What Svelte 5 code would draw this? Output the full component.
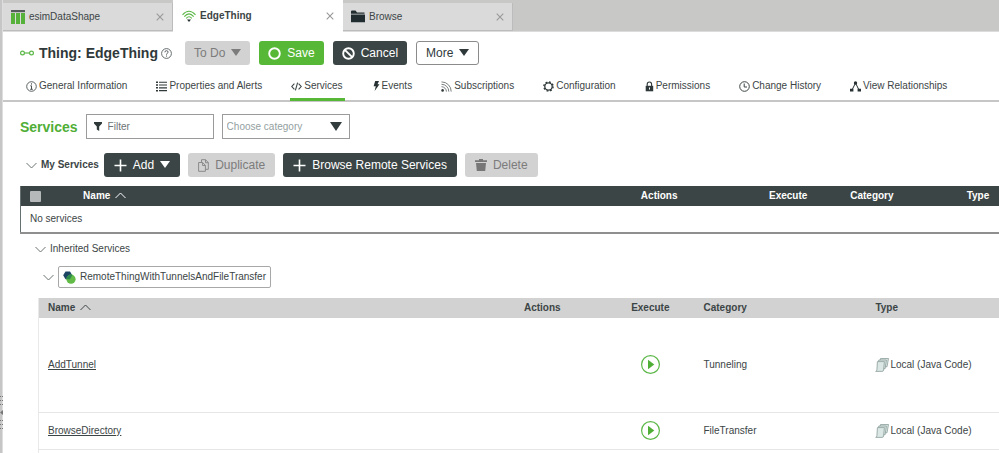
<script>
  const tabs = [
    { label: 'esimDataShape', icon: 'shape' },
    { label: 'EdgeThing', icon: 'wifi', active: true },
    { label: 'Browse', icon: 'folder' }
  ];
  const sections = [
    { label: 'General Information', icon: 'info' },
    { label: 'Properties and Alerts', icon: 'list' },
    { label: 'Services', icon: 'code', active: true },
    { label: 'Events', icon: 'bolt' },
    { label: 'Subscriptions', icon: 'rss' },
    { label: 'Configuration', icon: 'gear' },
    { label: 'Permissions', icon: 'lock' },
    { label: 'Change History', icon: 'clock' },
    { label: 'View Relationships', icon: 'tree' }
  ];
  const services = [
    { name: 'AddTunnel', category: 'Tunneling', type: 'Local (Java Code)', tall: true },
    { name: 'BrowseDirectory', category: 'FileTransfer', type: 'Local (Java Code)' }
  ];
  let filter = $state('');
</script>

{#snippet icon(name)}
  {#if name === 'shape'}
    <svg width="14" height="14" viewBox="0 0 14 14"><path fill="#555b5b" d="M0 0h14v2.200H0z" /><path fill="#55b13a" d="M0 3h4v11H0zM5 3h4v11H5zM10 3h4v11h-4z" /></svg>
  {:else if name === 'wifi'}
    <svg width="14" height="14" viewBox="0 0 14 14" fill="none" stroke="#5cb848" stroke-width="1.100"><path d="M.5 5.800Q7-1.300 13.500 5.800M2.300 7.600Q7 2.200 11.700 7.600M4.200 9.400Q7 6 9.800 9.400" /><path d="M5 10.500h4L7 13z" fill="#273234" stroke="none" /></svg>
  {:else if name === 'folder'}
    <svg width="14" height="13" viewBox="0 0 14 13" fill="#202c2f"><path d="M0 1.500Q0 .5 1 .5h3.500l1.500 2h7.500v1.300H0zM0 4.500h14V12.300H0z" /></svg>
  {:else if name === 'info'}
    <svg width="11" height="11" viewBox="0 0 11 11" fill="none" stroke="#4a5152"><circle cx="5.500" cy="5.500" r="4.800" stroke-width=".9" /><path d="M5.500 2.300v1.300M4.300 4.800h1.200v3.400M4.200 8.300h2.600" /></svg>
  {:else if name === 'list'}
    <svg width="11" height="11" viewBox="0 0 11 11" fill="#30393a"><path d="M0 .5h2v1.500H0zM0 3.300h2v1.500H0zM0 6.100h2v1.500H0zM0 8.900h2v1.500H0zM3 .7h8v1.100H3zM3 3.500h8v1.100H3zM3 6.300h8v1.100H3zM3 9.100h8v1.100H3z" /></svg>
  {:else if name === 'code'}
    <svg width="11" height="9" viewBox="0 0 11 9" fill="none" stroke="#3c4546" stroke-width="1.100"><path d="M3.400 1.700.8 4.500l2.600 2.800M7.600 1.700l2.600 2.800-2.600 2.800M6.600.7 4.400 8.300" /></svg>
  {:else if name === 'bolt'}
    <svg width="7" height="10" viewBox="0 0 7 10" fill="#273032"><path d="M2.200 0H6L4.500 3.300h2L1.600 10l1.200-4.700H.6z" /></svg>
  {:else if name === 'rss'}
    <svg width="11" height="11" viewBox="0 0 11 11" fill="none" stroke="#6c7273" stroke-width=".9"><path d="M.5.900A9.600 9.600 0 0 1 10.200 10.600M.5 3.300A7.200 7.200 0 0 1 7.800 10.600M.5 5.700A4.900 4.900 0 0 1 5.400 10.600" /><circle cx="1.600" cy="9.400" r="1.300" fill="#30393a" stroke="none" /></svg>
  {:else if name === 'gear'}
    <svg width="11" height="11" viewBox="0 0 11 11" fill="none" stroke="#30393a"><circle cx="5.500" cy="5.500" r="3.700" stroke-width="1.300" /><circle cx="5.500" cy="5.500" r="4.600" stroke-width="1.400" stroke-dasharray="1.800 1.813" /></svg>
  {:else if name === 'lock'}
    <svg width="9" height="11" viewBox="0 0 9 11"><path d="M2.200 5V3.200a2.200 2.200 0 0 1 4.400 0V5" fill="none" stroke="#30393a" stroke-width="1.100" /><path d="M.7 4.800h7.500v5.500H.7z" fill="#30393a" /><path d="M4 6.500h1v2H4z" fill="#fff" /></svg>
  {:else if name === 'clock'}
    <svg width="11" height="11" viewBox="0 0 11 11" fill="none" stroke="#3c4546"><circle cx="5.500" cy="5.500" r="4.800" /><path d="M5.200 2.500V6H8" /></svg>
  {:else if name === 'tree'}
    <svg width="11" height="11" viewBox="0 0 11 11" fill="#273032"><path d="M5.500 2 2 9M5.500 2 9 9" stroke="#273032" /><circle cx="5.500" cy="2" r="1.700" /><path d="M0 7.700h3.400v2.800H0zM7.600 7.700H11v2.800H7.600z" /></svg>
  {/if}
{/snippet}

{#snippet down()}
  <svg width="10" height="8" viewBox="0 0 10 8" fill="currentColor"><path d="M0 0h10L5 7z" /></svg>
{/snippet}

{#snippet plus()}
  <svg width="13" height="13" viewBox="0 0 13 13"><path d="M6.500 .5v12M.5 6.500h12" stroke="currentColor" stroke-width="1.600" /></svg>
{/snippet}

{#snippet chevron(up)}
  <svg width="11" height="7" viewBox="0 0 11 7" fill="none" stroke="currentColor"><path d={up ? 'M.5 6 5.500 1l5 5' : 'M.5 1l5 5 5-5'} /></svg>
{/snippet}

<div class="app">
  <div class="grip" aria-hidden="true">
    <svg width="3" height="34" viewBox="0 0 3 34" fill="#777"><path d="M0 0h1v1H0zM2 0h1v1H2zM0 4h1v1H0zM2 4h1v1H2zM0 8h1v1H0zM2 8h1v1H2zM3 14v5L0 16.500zM0 24h1v1H0zM2 24h1v1H2zM0 28h1v1H0zM2 28h1v1H2zM0 32h1v1H0zM2 32h1v1H2z" /></svg>
  </div>
  <div class="main">
    <div class="tabs">
      {#each tabs as tab}
        <div class="tab" class:active={tab.active}>
          <button class="tab-name">{@render icon(tab.icon)}<span>{tab.label}</span></button>
          <button class="close" aria-label="Close {tab.label}">
            <svg width="8" height="8" viewBox="0 0 8 8"><path d="m.7.700 6.600 6.600m0-6.600L.7 7.300" stroke="#999" stroke-width="1.100" /></svg>
          </button>
        </div>
      {/each}
    </div>

    <header>
      <svg width="14" height="6" viewBox="0 0 14 6" fill="none" stroke="#5cb848" stroke-width="1.200"><circle cx="2.500" cy="3" r="1.900" /><circle cx="11.500" cy="3" r="1.900" /><path d="M4.400 3h5.200" /></svg>
      <h1>Thing: EdgeThing</h1>
      <button class="help" aria-label="Help">
        <svg width="11" height="11" viewBox="0 0 11 11" fill="none" stroke="#555c5d"><circle cx="5.500" cy="5.500" r="4.900" stroke-width=".9" /><path d="M3.900 4.300q0-1.600 1.600-1.600t1.600 1.400c0 1.200-1.600 1.100-1.600 2.600M5.500 7.500v1.100" /></svg>
      </button>
      <div class="actions">
        <button class="btn muted" disabled>To Do {@render down()}</button>
        <button class="btn green"><svg width="13" height="13" viewBox="0 0 13 13"><circle cx="6.500" cy="6.500" r="5.300" fill="none" stroke="#fff" stroke-width="1.900" /></svg>Save</button>
        <button class="btn dark"><svg width="13" height="13" viewBox="0 0 13 13" fill="none" stroke="#fff" stroke-width="1.900"><circle cx="6.500" cy="6.500" r="5.300" /><path d="m2.800 2.800 7.400 7.400" /></svg>Cancel</button>
        <button class="btn outline">More {@render down()}</button>
      </div>
    </header>

    <nav>
      {#each sections as s}
        <a href="#{s.icon}" class:current={s.active}>{@render icon(s.icon)}<span>{s.label}</span></a>
      {/each}
    </nav>

    <div class="filters">
      <h2>Services</h2>
      <label class="field">
        <svg width="8" height="9" viewBox="0 0 8 9" fill="#30393a"><path d="M0 0h8v1.500L5.200 4.500V9L2.800 7.500v-3L0 1.500z" /></svg>
        <input type="text" placeholder="Filter" aria-label="Filter" bind:value={filter} />
      </label>
      <label class="field category">
        <select aria-label="Choose category"><option>Choose category</option></select>
        <svg width="12" height="9" viewBox="0 0 12 9" fill="#333c3d"><path d="M0 0h12L6 9z" /></svg>
      </label>
    </div>

    <div class="tools">
      <button class="toggle strong">{@render chevron(false)}My Services</button>
      <button class="btn dark">{@render plus()}Add {@render down()}</button>
      <button class="btn muted" disabled><svg width="11" height="13" viewBox="0 0 11 13" fill="none" stroke="#8a8a8a"><path d="M3.500 3.500V.7h4l2.800 2.800v6.800H7.500M7.500.700v3h2.800M.6 3.500h4L7.400 6.300v6H.6zM4.600 3.500v3h2.800" /></svg>Duplicate</button>
      <button class="btn dark">{@render plus()}Browse Remote Services</button>
      <button class="btn muted" disabled><svg width="12" height="12" viewBox="0 0 12 12" fill="#777"><path d="M4 0h4v1.300h4v1.700H0V1.300h4zM1 4h10l-.8 8H1.800z" /></svg>Delete</button>
    </div>

    <table class="mine">
      <thead>
        <tr>
          <th class="c-check"><input type="checkbox" aria-label="Select all services" /></th>
          <th class="c-name">Name {@render chevron(true)}</th>
          <th class="c-actions">Actions</th>
          <th class="c-exec">Execute</th>
          <th class="c-cat">Category</th>
          <th>Type</th>
        </tr>
      </thead>
      <tbody>
        <tr><td colspan="6">No services</td></tr>
      </tbody>
    </table>

    <div class="inherited">
      <button class="toggle">{@render chevron(false)}Inherited Services</button>
    </div>
    <div class="template">
      <button class="toggle" aria-label="Collapse RemoteThingWithTunnelsAndFileTransfer">{@render chevron(false)}</button>
      <a class="chip" href="#template">
        <svg width="13" height="13" viewBox="0 0 13 13"><path d="M2.500.500h4.500l2.300 3.800L7 8.300H2.500L.2 4.300z" fill="#1c4464" /><circle cx="8" cy="8.200" r="4.600" fill="#62bb46" /><path d="M3.700 6.500A4.600 4.600 0 0 1 8.800 3.700L9.300 4.300 7 8.300H3.400z" fill="#2f8a50" /></svg>
        RemoteThingWithTunnelsAndFileTransfer
      </a>
    </div>

    <table class="list">
      <thead>
        <tr>
          <th class="l-name">Name {@render chevron(true)}</th>
          <th class="l-actions">Actions</th>
          <th class="l-exec">Execute</th>
          <th class="l-cat">Category</th>
          <th>Type</th>
        </tr>
      </thead>
      <tbody>
        {#each services as s}
          <tr class:tall={s.tall}>
            <td><a href="#{s.name}">{s.name}</a></td>
            <td></td>
            <td class="l-exec">
              <button class="run" aria-label="Execute {s.name}">
                <svg width="19" height="19" viewBox="0 0 19 19"><circle cx="9.500" cy="9.500" r="8.900" fill="#fff" stroke="#5cb848" stroke-width="1.200" /><path d="M7 4.700 13.300 9.500 7 14.300z" fill="#4fae36" /></svg>
              </button>
            </td>
            <td>{s.category}</td>
            <td>
              <span class="type">
                <svg width="14" height="14" viewBox="0 0 14 14" fill="#dbe7e4" stroke="#8b9e9b" stroke-width=".8"><path d="M5.500.500h8l-1.500 8.300H4z" /><path d="M3.800 2h7.600l-1.300 8.700H2.500z" /><path d="M2.400 3.600h7L8.600 12q-.2 1.400-1.500 1.400H.7q1.200-.3 1.200-1.600z" /></svg>
                {s.type}
              </span>
            </td>
          </tr>
        {/each}
        <tr class="next"><td colspan="5"></td></tr>
      </tbody>
    </table>
  </div>
</div>

<style>
  :global(body) { margin: 0; background: #fff; }
  .app {
    display: flex;
    height: 100vh;
    overflow: hidden;
    box-sizing: border-box;
    font-family: "Liberation Sans", Arial, sans-serif;
    font-size: 10px;
    line-height: 14px;
    color: #3c4546;
  }
  svg { display: block; flex: none; }
  button, input, select { font: inherit; color: inherit; margin: 0; }
  button { border: 0; padding: 0; background: none; }
  a { color: inherit; text-decoration: none; }
  h1, h2 { margin: 0; }
  .grip { width: 3px; flex: none; background: #c6c6c6; border-right: 1px solid #dedede; padding-top: 396px; box-sizing: border-box; }
  .main { flex: 1; min-width: 0; }

  .tabs { display: flex; height: 32px; background: #c8c8c6; border-bottom: 1px solid #dcdcdc; box-sizing: border-box; }
  .tab {
    display: flex;
    align-items: center;
    justify-content: space-between;
    width: 170px;
    margin-top: 3px;
    padding: 0 8px;
    box-sizing: border-box;
    background: #dadada;
    border-right: 1px solid #bcbcbc;
    border-bottom: 1px solid #bcbcbc;
  }
  .tab.active { margin: 0 0 -1px; padding: 0 9px; background: #fff; border: 0; }
  .tab.active .tab-name { font-weight: bold; }
  .tab-name { display: flex; align-items: center; gap: 4px; }

  header { display: flex; align-items: center; padding: 9px 17px 0; color: #30393a; }
  h1 { margin: 0 3px 0 5px; font-size: 14px; line-height: 20px; }
  .actions { display: flex; gap: 9px; margin-left: 13px; }
  .btn {
    display: flex;
    align-items: center;
    gap: 6px;
    height: 24px;
    padding: 0 10px;
    border-radius: 3px;
    font-size: 12px;
    line-height: 16px;
    white-space: nowrap;
  }
  .actions .btn { padding: 0 9px; }
  .muted { background: #d2d2d2; color: #7c7c7c; }
  .green { background: #57b737; color: #fff; }
  .dark { background: #3b4545; color: #fff; }
  .outline { background: #fff; border: 1px solid #8b8b8b; }

  nav { display: flex; gap: 27px; padding: 11px 22px 0; border-bottom: 2px solid #c6c6c6; }
  nav a { display: flex; align-items: center; gap: 2px; height: 20px; padding: 0 1px 4px; white-space: nowrap; }
  nav a.current { padding-right: 2px; margin-bottom: -1px; border-bottom: 3px solid #57b737; padding-bottom: 2px; }

  .filters { display: flex; align-items: center; gap: 8px; padding: 12px 17px 0; }
  h2 { color: #4fae36; font-size: 14px; line-height: 18px; }
  .field {
    display: flex;
    align-items: center;
    gap: 6px;
    width: 128px;
    height: 25px;
    padding: 0 7px;
    box-sizing: border-box;
    border: 1px solid #9b9b9b;
    background: #fff;
  }
  .field input { flex: 1; min-width: 0; padding: 0; border: 0; outline: 0; background: none; }
  .field input::placeholder { color: #6c7273; opacity: 1; }
  .category { padding: 0 7px 0 4px; }
  .field select { flex: 1; min-width: 0; padding: 0; appearance: none; border: 0; outline: 0; background: none; color: #93a0a0; }

  .tools { display: flex; align-items: center; gap: 8px; padding: 14px 23px 0; }
  .toggle { display: flex; align-items: center; gap: 4px; white-space: nowrap; }
  .tools .toggle { margin-right: -3px; }
  .strong { font-weight: bold; }
  .toggle svg { color: #6c7273; }

  table { border-collapse: collapse; table-layout: fixed; }
  th, td { box-sizing: border-box; }
  th { padding: 0; text-align: left; font-weight: bold; }
  th svg { display: inline-block; margin-left: 2px; }
  .mine { width: calc(100% - 17px); margin: 9px 0 0 17px; border-left: 1px solid #667070; border-bottom: 2px solid #8f8f8f; }
  .mine th { height: 20px; background: #3b4545; color: #fff; }
  .mine td { height: 27px; padding: 0 9px; }
  .mine input { display: block; width: 11px; height: 11px; margin-left: 9px; appearance: none; background: #b5b9b9; border-radius: 1px; }
  .c-check { width: 6.4%; }
  .c-name { width: 57%; }
  .c-actions { width: 13.1%; }
  .c-exec { width: 8.3%; }
  .c-cat { width: 11.9%; }

  .inherited { padding: 8px 32px 0; }
  .template { display: flex; align-items: center; gap: 4px; padding: 10px 40px 0; }
  .chip { display: flex; align-items: center; gap: 4px; height: 20px; padding: 0 4px; border: 1px solid #a8a8a8; border-radius: 2px; }

  .list { width: calc(100% - 35px); margin: 10px 0 0 35px; border-left: 1px solid #e9e9e9; }
  .list th { height: 20px; padding: 0 9px; background: #d2d2d2; }
  .list td { height: 37px; padding: 1px 9px 0; border-bottom: 1px solid #e6e6e6; }
  .list .tall td { height: 94px; }
  .list td a { text-decoration: underline; }
  .l-name { width: 49.6%; }
  .l-actions { width: 9.500%; }
  .list .l-exec { width: 9.200%; padding: 0; text-align: center; }
  .l-cat { width: 17.9%; }
  .run { display: inline-block; vertical-align: middle; }
  .type { display: flex; align-items: center; gap: 1px; white-space: nowrap; }
</style>
